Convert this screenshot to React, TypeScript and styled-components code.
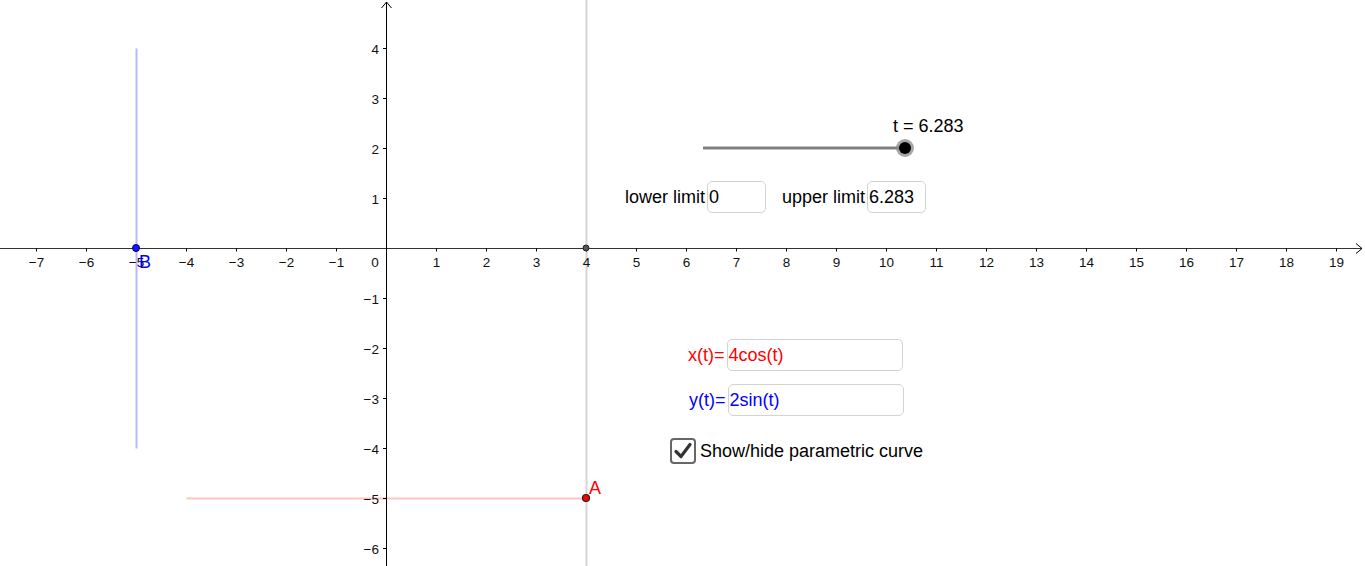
import React from 'react';
import styled, { createGlobalStyle } from 'styled-components';

const GlobalStyle = createGlobalStyle`
  html, body {
    margin: 0;
    padding: 0;
    background: #fff;
    overflow: hidden;
  }
  body {
    font-family: "Liberation Sans", Arial, sans-serif;
  }
`;

// graph coordinates -> screen (half-pixel so 1px strokes sit on a pixel row)
const OX = 386.5;
const OY = 248.5;
const U = 50;
const sx = (x: number) => OX + x * U;
const sy = (y: number) => OY - y * U;

const W = 1365;
const H = 566;

const Board = styled.div`
  position: relative;
  width: ${W}px;
  height: ${H}px;
  background: #fff;
  overflow: hidden;
`;

const Canvas = styled.svg`
  display: block;
  font-family: "Liberation Sans", Arial, sans-serif;
`;

const Widget = styled.div<{ $x: number; $y: number }>`
  position: absolute;
  left: ${(p) => p.$x}px;
  top: ${(p) => p.$y}px;
  display: flex;
  align-items: center;
  font-size: 18px;
  color: #000;
  white-space: nowrap;
`;

const Caption = styled.span<{ $color?: string }>`
  color: ${(p) => p.$color || '#000'};
  margin-right: 2px;
`;

const InputBox = styled.div<{ $w: number; $color?: string }>`
  box-sizing: border-box;
  width: ${(p) => p.$w}px;
  height: 32px;
  border: 1px solid #d3d3d3;
  border-radius: 5px;
  padding: 0 1px;
  display: flex;
  align-items: center;
  color: ${(p) => p.$color || '#000'};
  background: #fff;
`;

const Pair = styled.div`
  display: flex;
  align-items: center;
  gap: 16px;
`;

const Field = styled.div`
  display: flex;
  align-items: center;
`;

const CheckBox = styled.div`
  box-sizing: border-box;
  width: 26px;
  height: 26px;
  border: 2px solid #666;
  border-radius: 4px;
  display: flex;
  align-items: center;
  justify-content: center;
  margin-right: 4px;
  background: #fff;
`;

const Axes: React.FC = () => {
  const xs: number[] = [];
  for (let i = -7; i <= 19; i++) if (i !== 0) xs.push(i);
  const ys = [4, 3, 2, 1, -1, -2, -3, -4, -5, -6];
  const fmt = (n: number) => (n < 0 ? '\u2212' + Math.abs(n) : String(n));

  return (
    <Canvas width={W} height={H} viewBox={`0 0 ${W} ${H}`}>
      {/* auxiliary lines */}
      <line x1={sx(4)} y1={0} x2={sx(4)} y2={H} stroke="#d6d6d6" strokeWidth={2} />
      <line x1={sx(-5)} y1={sy(4)} x2={sx(-5)} y2={sy(-4)} stroke="#b8b8ff" strokeWidth={2} />
      <line x1={sx(-4)} y1={sy(-5)} x2={sx(4)} y2={sy(-5)} stroke="#ffc4c4" strokeWidth={2} />

      {/* x axis */}
      <line x1={0} y1={OY} x2={1362} y2={OY} stroke="#333" strokeWidth={1.2} />
      <polyline points="1356,243.5 1362,248.5 1356,253.5" fill="none" stroke="#000" strokeWidth={1} />
      {xs.map((i) => (
        <g key={`x${i}`}>
          <line x1={sx(i)} y1={OY} x2={sx(i)} y2={OY + 3} stroke="#000" strokeWidth={1} />
          <text x={sx(i)} y={267} fontSize={13.5} textAnchor="middle" fill="#111">
            {fmt(i)}
          </text>
        </g>
      ))}
      <text x={375} y={267} fontSize={13.5} textAnchor="middle" fill="#111">
        0
      </text>

      {/* y axis */}
      <line x1={OX} y1={2} x2={OX} y2={H} stroke="#000" strokeWidth={1} />
      <polyline points="381.5,8 386.5,2 391.5,8" fill="none" stroke="#000" strokeWidth={1} />
      {ys.map((j) => (
        <g key={`y${j}`}>
          <line x1={OX - 3.5} y1={sy(j)} x2={OX} y2={sy(j)} stroke="#000" strokeWidth={1} />
          <text x={379} y={sy(j) + 5} fontSize={13.5} textAnchor="end" fill="#111">
            {fmt(j)}
          </text>
        </g>
      ))}

      {/* points */}
      <circle cx={sx(4) - 0.5} cy={OY - 0.5} r={3} fill="#555" stroke="#222" strokeWidth={1} />
      <circle cx={sx(-5) - 0.5} cy={OY - 0.5} r={3.5} fill="#1414ff" stroke="#000060" strokeWidth={1} />
      <text x={139} y={268} fontSize={18} fill="#0000ff">
        B
      </text>
      <circle cx={sx(4) - 0.5} cy={sy(-5) - 0.5} r={3.5} fill="#ff0000" stroke="#222" strokeWidth={1.2} />
      <text x={589} y={494} fontSize={18} fill="#ff0000">
        A
      </text>

      {/* slider t */}
      <line x1={703} y1={148} x2={905} y2={148} stroke="#808080" strokeWidth={3} />
      <circle cx={905} cy={148} r={9} fill="#8a8a8a" opacity={0.75} />
      <circle cx={905} cy={148} r={6} fill="#000" />
    </Canvas>
  );
};

const CheckMark: React.FC = () => (
  <svg width="20" height="20" viewBox="0 0 20 20">
    <polyline
      points="3,10.5 8,15.5 17,3.5"
      fill="none"
      stroke="#333"
      strokeWidth={3.2}
      strokeLinecap="round"
      strokeLinejoin="round"
    />
  </svg>
);

const App: React.FC = () => (
  <>
    <GlobalStyle />
    <Board>
      <Axes />

      <Widget $x={893} $y={116}>t = 6.283</Widget>

      <Widget $x={625} $y={181}>
        <Pair>
          <Field>
            <Caption>lower limit</Caption>
            <InputBox $w={59}>0</InputBox>
          </Field>
          <Field>
            <Caption>upper limit</Caption>
            <InputBox $w={59}>6.283</InputBox>
          </Field>
        </Pair>
      </Widget>

      <Widget $x={688} $y={339}>
        <Caption $color="#ff0000">x(t)=</Caption>
        <InputBox $w={176} $color="#ff0000">4cos(t)</InputBox>
      </Widget>

      <Widget $x={689} $y={384}>
        <Caption $color="#0000ff">y(t)=</Caption>
        <InputBox $w={176} $color="#0000ff">2sin(t)</InputBox>
      </Widget>

      <Widget $x={670} $y={438}>
        <CheckBox>
          <CheckMark />
        </CheckBox>
        <span>Show/hide parametric curve</span>
      </Widget>
    </Board>
  </>
);

export default App;
